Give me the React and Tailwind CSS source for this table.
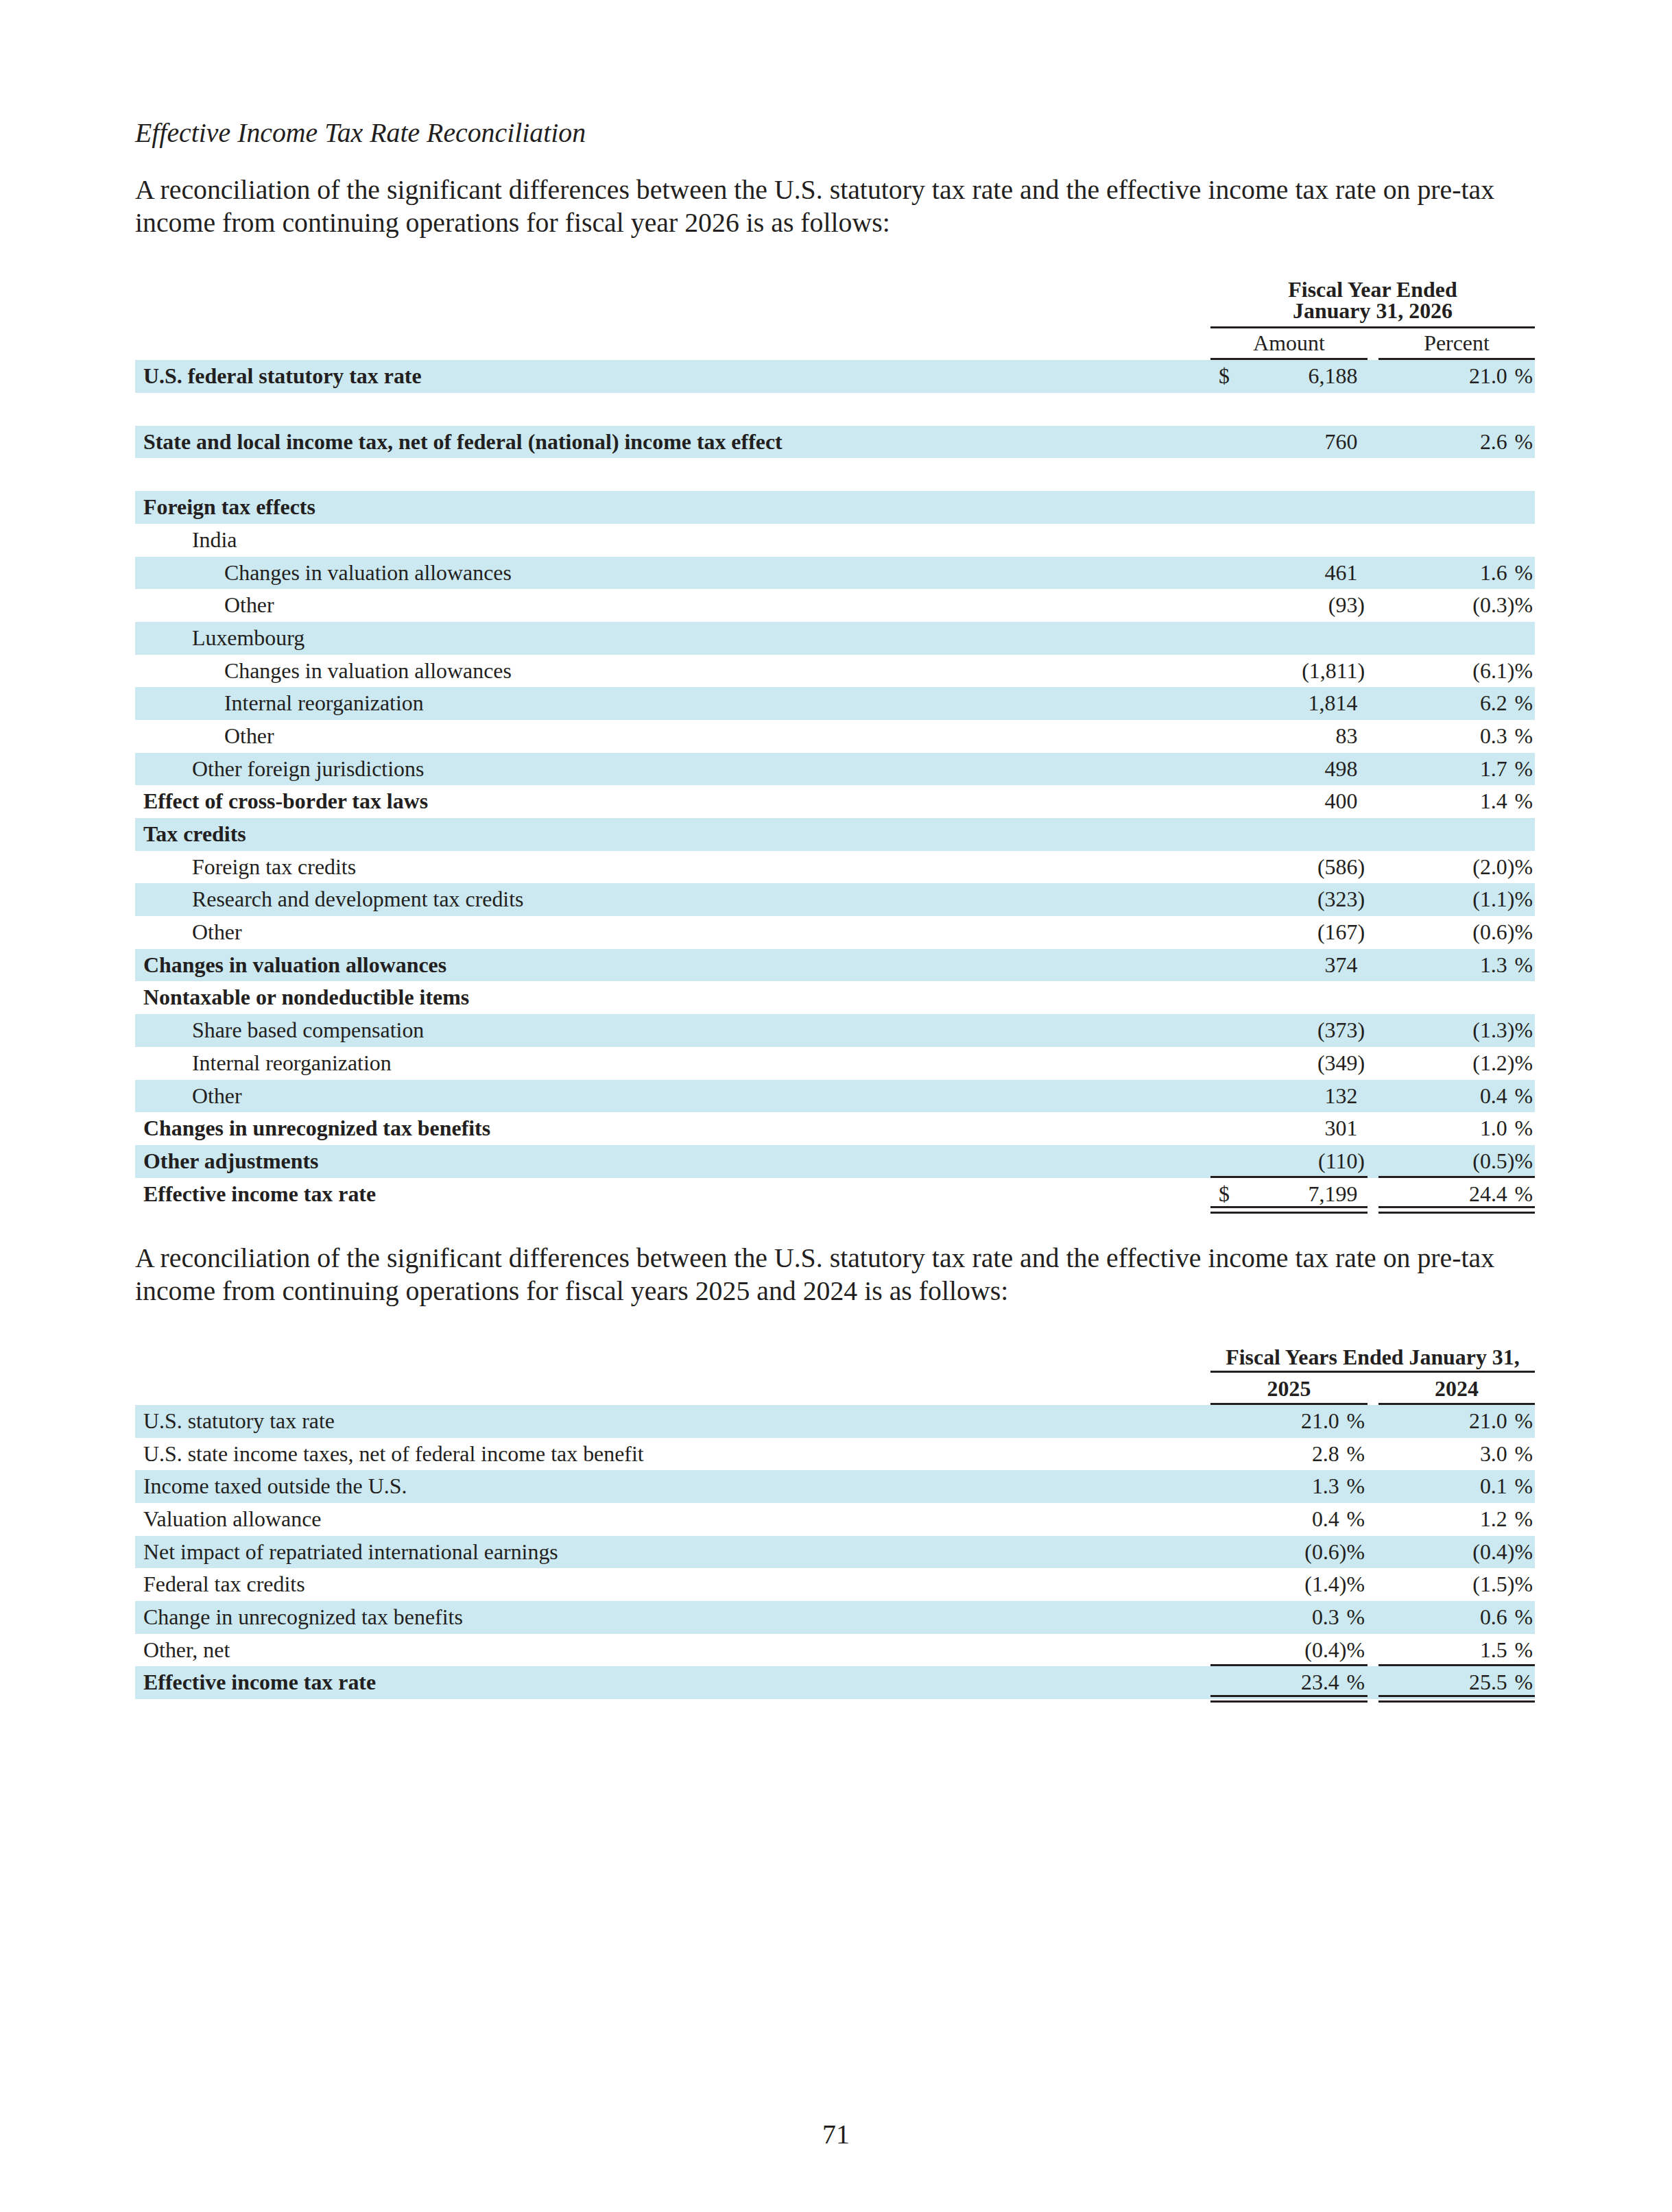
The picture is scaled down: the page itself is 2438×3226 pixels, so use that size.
const rows2026 = [
  { label: "U.S. federal statutory tax rate", bold: true, dollar: true, a: "6,188", p: "21.0" },
  { blank: true },
  { label: "State and local income tax, net of federal (national) income tax effect", bold: true, a: "760", p: "2.6" },
  { blank: true },
  { label: "Foreign tax effects", bold: true },
  { label: "India", level: 1 },
  { label: "Changes in valuation allowances", level: 2, a: "461", p: "1.6" },
  { label: "Other", level: 2, a: "(93)", p: "(0.3)" },
  { label: "Luxembourg", level: 1 },
  { label: "Changes in valuation allowances", level: 2, a: "(1,811)", p: "(6.1)" },
  { label: "Internal reorganization", level: 2, a: "1,814", p: "6.2" },
  { label: "Other", level: 2, a: "83", p: "0.3" },
  { label: "Other foreign jurisdictions", level: 1, a: "498", p: "1.7" },
  { label: "Effect of cross-border tax laws", bold: true, a: "400", p: "1.4" },
  { label: "Tax credits", bold: true },
  { label: "Foreign tax credits", level: 1, a: "(586)", p: "(2.0)" },
  { label: "Research and development tax credits", level: 1, a: "(323)", p: "(1.1)" },
  { label: "Other", level: 1, a: "(167)", p: "(0.6)" },
  { label: "Changes in valuation allowances", bold: true, a: "374", p: "1.3" },
  { label: "Nontaxable or nondeductible items", bold: true },
  { label: "Share based compensation", level: 1, a: "(373)", p: "(1.3)" },
  { label: "Internal reorganization", level: 1, a: "(349)", p: "(1.2)" },
  { label: "Other", level: 1, a: "132", p: "0.4" },
  { label: "Changes in unrecognized tax benefits", bold: true, a: "301", p: "1.0" },
  { label: "Other adjustments", bold: true, a: "(110)", p: "(0.5)", rule: "single" },
  { label: "Effective income tax rate", bold: true, dollar: true, a: "7,199", p: "24.4", rule: "double" },
];

const rowsPrior = [
  { label: "U.S. statutory tax rate", a: "21.0", p: "21.0" },
  { label: "U.S. state income taxes, net of federal income tax benefit", a: "2.8", p: "3.0" },
  { label: "Income taxed outside the U.S.", a: "1.3", p: "0.1" },
  { label: "Valuation allowance", a: "0.4", p: "1.2" },
  { label: "Net impact of repatriated international earnings", a: "(0.6)", p: "(0.4)" },
  { label: "Federal tax credits", a: "(1.4)", p: "(1.5)" },
  { label: "Change in unrecognized tax benefits", a: "0.3", p: "0.6" },
  { label: "Other, net", a: "(0.4)", p: "1.5", rule: "single" },
  { label: "Effective income tax rate", bold: true, a: "23.4", p: "25.5", rule: "double" },
];

const indent = ["pl-[12px]", "pl-[83px]", "pl-[130px]"];

const Amount = ({ v }) =>
  v.startsWith("(") ? v : (
    <>
      {v}
      <span className="invisible">)</span>
    </>
  );

const Percent = ({ v }) =>
  v.startsWith("(") ? `${v}%` : (
    <>
      {v}
      <span className="invisible">)</span>%
    </>
  );

function ValueCell({ width, pr, rule, dollar, children }) {
  return (
    <div className={`${width} h-full ${rule === "single" ? "border-b-[3px] border-[#231f20]" : ""}`}>
      <div className={`flex h-[47.7px] ${dollar ? "justify-between pl-[12px]" : "justify-end"} ${pr}`}>
        {dollar && <span>$</span>}
        <span>{children}</span>
      </div>
      {rule === "double" && <div className="-mt-[6px] h-[11px] border-y-[3px] border-[#231f20]" />}
    </div>
  );
}

function Row({ row, shaded, percentBoth }) {
  return (
    <div className={`flex h-[47.7px] leading-[47.7px] ${shaded ? "bg-[#cce9f1]" : ""}`}>
      <div className={`flex-1 whitespace-nowrap ${indent[row.level || 0]} ${row.bold ? "font-bold" : ""}`}>
        {row.label}
      </div>
      {!row.blank && (
        <>
          <ValueCell width="w-[229px]" pr="pr-[4px]" rule={row.rule} dollar={row.dollar}>
            {row.a && (percentBoth ? <Percent v={row.a} /> : <Amount v={row.a} />)}
          </ValueCell>
          <div className="w-[16px]" />
          <ValueCell width="w-[228px]" pr="pr-[3px]" rule={row.rule}>
            {row.p && <Percent v={row.p} />}
          </ValueCell>
        </>
      )}
    </div>
  );
}

function Intro({ years, className }) {
  return (
    <p className={`text-[39.8px] leading-[47.8px] whitespace-nowrap ${className}`}>
      A reconciliation of the significant differences between the U.S. statutory tax rate and the effective income tax rate on pre-tax
      <br />
      income from continuing operations for {years} is as follows:
    </p>
  );
}

export default function App() {
  return (
    <div className="min-h-[3226px] w-[2438px] bg-white text-[#231f20] font-['Liberation_Serif','Times_New_Roman',serif]">
      <div className="ml-[197px] w-[2041px] pt-[170.7px]">
        <h2 className="text-[39.8px] leading-[47.8px] italic">Effective Income Tax Rate Reconciliation</h2>

        <Intro years="fiscal year 2026" className="mt-[36px]" />

        <div className="mt-[57px] text-[31.9px]">
          <div className="flex">
            <div className="flex-1" />
            <div className="w-[473px] border-b-[3px] border-[#231f20] pb-[7px] text-center font-bold leading-[31px]">
              Fiscal Year Ended
              <br />
              January 31, 2026
            </div>
          </div>
          <div className="flex h-[46.3px] leading-[44.5px]">
            <div className="flex-1" />
            <div className="w-[229px] border-b-[3px] border-[#231f20] text-center">Amount</div>
            <div className="w-[16px]" />
            <div className="w-[228px] border-b-[3px] border-[#231f20] text-center">Percent</div>
          </div>
          {rows2026.map((row, i) => (
            <Row key={i} row={row} shaded={i % 2 === 0} />
          ))}
        </div>

        <Intro years="fiscal years 2025 and 2024" className="mt-[47px]" />

        <div className="mt-[55.7px] text-[31.9px]">
          <div className="flex">
            <div className="flex-1" />
            <div className="w-[473px] border-b-[3px] border-[#231f20] pb-[4.4px] text-center font-bold leading-[31px]">
              Fiscal Years Ended January 31,
            </div>
          </div>
          <div className="flex h-[47px] font-bold leading-[47px]">
            <div className="flex-1" />
            <div className="w-[229px] border-b-[3px] border-[#231f20] text-center">2025</div>
            <div className="w-[16px]" />
            <div className="w-[228px] border-b-[3px] border-[#231f20] text-center">2024</div>
          </div>
          {rowsPrior.map((row, i) => (
            <Row key={i} row={row} shaded={i % 2 === 0} percentBoth />
          ))}
        </div>
      </div>

      <div className="mt-[612px] text-center text-[39.8px] leading-[47.8px]">71</div>
    </div>
  );
}
